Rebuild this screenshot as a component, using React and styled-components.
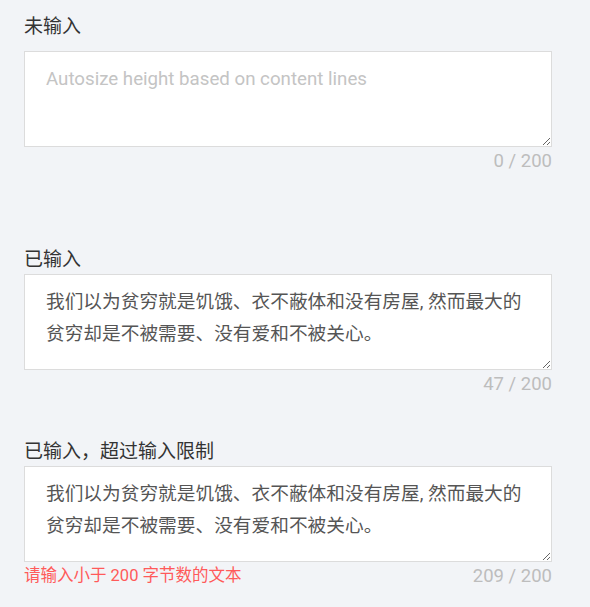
import React from 'react';
import styled, { createGlobalStyle } from 'styled-components';

const GlobalStyle = createGlobalStyle`
  html, body {
    margin: 0;
    padding: 0;
    background: #f2f4f7;
  }
  body {
    font-family: Roboto, "Noto Sans CJK SC", sans-serif;
  }
`;

const Page = styled.div`
  width: 590px;
  min-height: 607px;
  box-sizing: border-box;
  padding: 15px 38px 0 24px;
  background: #f2f4f7;
`;

const Field = styled.div`
  display: flex;
  flex-direction: column;
  margin-bottom: ${(props) => props.$gap}px;
`;

const Label = styled.div`
  font-size: 19px;
  line-height: 24px;
  color: #333;
  margin-bottom: ${(props) => props.$space}px;
`;

const TextArea = styled.textarea`
  display: block;
  box-sizing: border-box;
  width: 100%;
  height: 96px;
  margin: 0;
  padding: 11px 22px 7px 21px;
  border: 1px solid #dcdcdc;
  border-radius: 0;
  background: #fff;
  font-family: Roboto, "Noto Sans CJK SC", sans-serif;
  font-size: 18.7px;
  line-height: 32px;
  color: #555;
  resize: vertical;
  outline: none;

  &::placeholder {
    color: #c4c4c4;
  }
`;

const Footer = styled.div`
  display: flex;
  justify-content: space-between;
  align-items: center;
  margin-top: 3px;
  line-height: 22px;
`;

const ErrorText = styled.span`
  font-size: 16.5px;
  color: #ff5a5a;
`;

const Counter = styled.span`
  margin-left: auto;
  font-size: 18.5px;
  color: #bdbdbd;
`;

const longText =
  '我们以为贫穷就是饥饿、衣不蔽体和没有房屋, 然而最大的贫穷却是不被需要、没有爱和不被关心。';

const fields = [
  { label: '未输入', value: '', count: '0 / 200', space: 12, gap: 76 },
  { label: '已输入', value: longText, count: '47 / 200', space: 2, gap: 45 },
  {
    label: '已输入，超过输入限制',
    value: longText,
    count: '209 / 200',
    error: '请输入小于 200 字节数的文本',
    space: 2,
    gap: 0,
  },
];

export default function App() {
  return (
    <Page>
      <GlobalStyle />
      {fields.map((field) => (
        <Field key={field.label} $gap={field.gap}>
          <Label $space={field.space}>{field.label}</Label>
          <TextArea
            value={field.value}
            placeholder="Autosize height based on content lines"
            readOnly
          />
          <Footer>
            {field.error && <ErrorText>{field.error}</ErrorText>}
            <Counter>{field.count}</Counter>
          </Footer>
        </Field>
      ))}
    </Page>
  );
}
